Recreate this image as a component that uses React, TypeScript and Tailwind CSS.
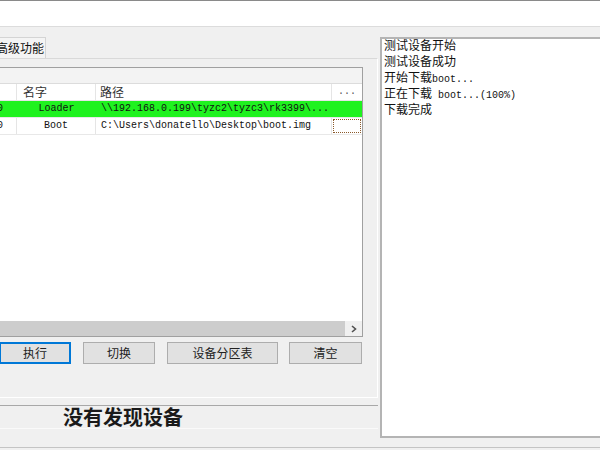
const ui = "font-['Noto_Sans_CJK_SC','Noto_Sans',sans-serif]";
const mono = "font-['Liberation_Mono','Noto_Sans_CJK_SC',monospace]";

type Row = { idx: string; name: string; path: string; active?: boolean };

const rows: Row[] = [
  { idx: "0", name: "Loader", path: "\\\\192.168.0.199\\tyzc2\\tyzc3\\rk3399\\...", active: true },
  { idx: "0", name: "Boot", path: "C:\\Users\\donatello\\Desktop\\boot.img" },
];

const logs = ["测试设备开始", "测试设备成功", "开始下载boot...", "正在下载 boot...(100%)", "下载完成"];

const Btn = ({ label, w, focus }: { label: string; w: string; focus?: boolean }) => (
  <button
    className={`${w} h-[22px] ${ui} text-[12px] text-[#222] bg-[#e1e1e1] flex items-center justify-center ${
      focus ? "border-2 border-[#0078d7]" : "border border-[#adadad]"
    }`}
  >
    {label}
  </button>
);

// log lines: CJK in sans, latin in the serif mono
const LogLine = ({ text }: { text: string }) => {
  const parts = text.split(/([\x20-\x7e]+)/).filter(Boolean);
  return (
    <div className="h-[16px] leading-[16px] whitespace-pre">
      {parts.map((p, i) =>
        /^[\x20-\x7e]+$/.test(p) ? (
          <span key={i} className={`${mono} text-[10px]`}>
            {p}
          </span>
        ) : (
          <span key={i} className={`${ui} text-[12px]`}>
            {p}
          </span>
        )
      )}
    </div>
  );
};

export default function App() {
  return (
    <div className="w-[600px] h-[450px] bg-[#f0f0f0] flex flex-col overflow-hidden text-[#111]">
      {/* top strip */}
      <div className="h-[27px] bg-white border-t border-[#8a8a8a] border-b border-b-[#dcdcdc] shrink-0" />

      <div className="flex h-[420px] shrink-0">
        {/* left column */}
        <div className="w-[378px] shrink-0 flex flex-col">
          <div className="mt-[10px] h-[21px] w-[46px] bg-[#f4f4f4] border-t border-r border-[#d4d4d4] flex items-center overflow-hidden">
            <span className={`${ui} text-[12px] -ml-[4px] whitespace-nowrap`}>高级功能</span>
          </div>

          {/* tab page */}
          <div className="h-[340px] border-t border-[#d9d9d9] border-r border-r-white border-b border-b-white flex flex-col">
            <div className="mt-[8px] w-[363px] h-[270px] border-t border-r border-b border-[#a0a0a0] flex flex-col bg-white">
              <div className="h-[16px] bg-[#f3f3f3] border-b border-[#dcdcdc]" />
              {/* header */}
              <div className={`flex h-[17px] border-b border-[#e5e5e5] ${ui} text-[12px] text-[#333]`}>
                <div className="w-[17px] border-r border-[#e5e5e5]" />
                <div className="w-[79px] border-r border-[#e5e5e5] pl-[6px] leading-[16px]">名字</div>
                <div className="w-[236px] border-r border-[#e5e5e5] pl-[4px] leading-[16px]">路径</div>
                <div className={`w-[30px] ${mono} text-[10px] text-center leading-[16px] text-[#555]`}>...</div>
              </div>
              {rows.map((r, i) => (
                <div
                  key={i}
                  className={`flex h-[17px] border-b border-[#e8e8e8] ${mono} text-[10px] leading-[16px] ${
                    r.active ? "bg-[#1ff21f] border-[#1ff21f]" : "bg-white"
                  }`}
                >
                  <div className={`w-[17px] overflow-hidden ${r.active ? "" : "border-r border-[#e5e5e5]"}`}>
                    <span className="-ml-[3px] block">{r.idx}</span>
                  </div>
                  <div className={`w-[79px] text-center ${r.active ? "" : "border-r border-[#e5e5e5]"}`}>{r.name}</div>
                  <div className={`w-[236px] pl-[5px] whitespace-nowrap overflow-hidden ${r.active ? "" : "border-r border-[#e5e5e5]"}`}>
                    {r.path}
                  </div>
                  <div className="w-[30px] p-[1px]">
                    {!r.active && <div className="h-full border border-dotted border-[#8b5a2b]" />}
                  </div>
                </div>
              ))}
              <div className="flex-1" />
              {/* horizontal scrollbar */}
              <div className="h-[15px] flex bg-[#f0f0f0]">
                <div className="w-[345px] bg-[#cdcdcd]" />
                <div className="flex-1 flex items-center justify-center">
                  <svg width="6" height="8" viewBox="0 0 6 8">
                    <path d="M1 1 L4.5 4 L1 7" fill="none" stroke="#505050" strokeWidth="1.6" />
                  </svg>
                </div>
              </div>
            </div>

            <div className="mt-[5px] flex">
              <div className="-ml-[1px] flex">
                <Btn label="执行" w="w-[72px]" focus />
              </div>
              <div className="ml-[12px]">
                <Btn label="切换" w="w-[72px]" />
              </div>
              <div className="ml-[12px]">
                <Btn label="设备分区表" w="w-[111px]" />
              </div>
              <div className="ml-[11px]">
                <Btn label="清空" w="w-[73px]" />
              </div>
            </div>
          </div>

          {/* status bar */}
          <div className="mt-[7px] h-[24px] border-t border-[#a8a8a8] border-b border-b-[#fafafa] flex items-center">
            <span className={`${ui} font-bold text-[20px] leading-[22px] ml-[63px] text-[#1a1a1a]`}>没有发现设备</span>
          </div>
        </div>

        {/* right log panel */}
        <div className="flex-1 pl-[2px] pt-[10px]">
          <div className="h-[401px] bg-white border-l-2 border-t-2 border-b-2 border-[#b4b4b4] pl-[2px] overflow-hidden">
            <div className="-mt-[3px]">
              {logs.map((l, i) => (
                <LogLine key={i} text={l} />
              ))}
            </div>
          </div>
        </div>
      </div>

      <div className="flex-1 border-t border-[#c4c4c4]" />
    </div>
  );
}
